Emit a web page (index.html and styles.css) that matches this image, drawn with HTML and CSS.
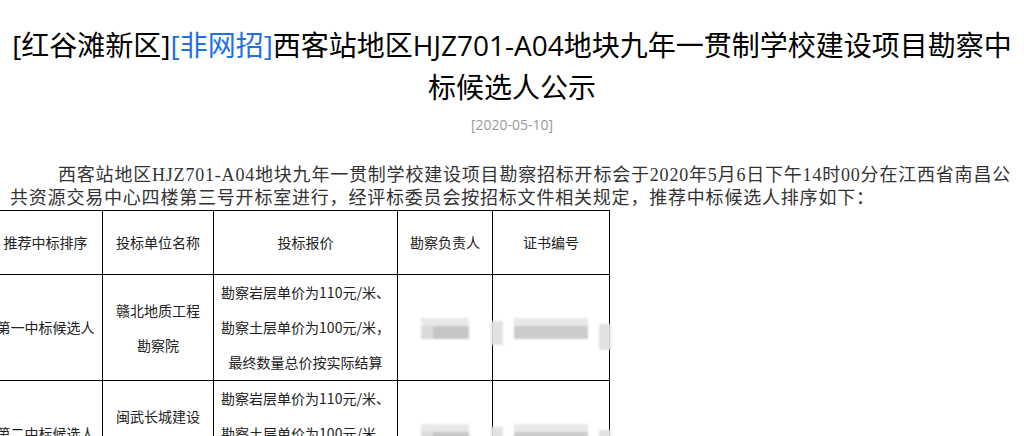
FILE: index.html
```html
<!doctype html>
<html lang="zh-CN">
<head>
    <meta charset="UTF-8">
    <meta name="viewport" content="width=device-width, initial-scale=1.0">
    <title>西客站地区HJZ701-A04地块九年一贯制学校建设项目勘察中标候选人公示</title>
    <link rel="stylesheet" href="styles.css">
</head>
<body>
    <div id="article">
        <h1 class="article-title">[红谷滩新区]<span class="tag">[非网招]</span>西客站地区HJZ701-A04地块九年一贯制学校建设项目勘察中标候选人公示</h1>
        <div class="article-date">[2020-05-10]</div>

        <div class="article-body">
            <p class="lead">西客站地区HJZ701-A04地块九年一贯制学校建设项目勘察招标开标会于2020年5月6日下午14时00分在江西省南昌公共资源交易中心四楼第三号开标室进行，经评标委员会按招标文件相关规定，推荐中标候选人排序如下：</p>

            <table class="result-table">
                <colgroup>
                    <col class="col-rank">
                    <col class="col-name">
                    <col class="col-price">
                    <col class="col-person">
                    <col class="col-cert">
                </colgroup>
                <tr class="head-row">
                    <td>推荐中标排序</td>
                    <td>投标单位名称</td>
                    <td>投标报价</td>
                    <td>勘察负责人</td>
                    <td>证书编号</td>
                </tr>
                <tr>
                    <td>第一中标候选人</td>
                    <td class="cell-name">赣北地质工程勘察院</td>
                    <td>
                        <p>勘察岩层单价为110元/米、</p>
                        <p>勘察土层单价为100元/米，</p>
                        <p>最终数量总价按实际结算</p>
                    </td>
                    <td><span class="mask mask-short"></span></td>
                    <td><span class="mask mask-long"></span></td>
                </tr>
                <tr>
                    <td>第二中标候选人</td>
                    <td class="cell-name">闽武长城建设工程有限公司</td>
                    <td>
                        <p>勘察岩层单价为110元/米、</p>
                        <p>勘察土层单价为100元/米，</p>
                        <p>最终数量总价按实际结算</p>
                    </td>
                    <td><span class="mask mask-short"></span></td>
                    <td><span class="mask mask-long"></span></td>
                </tr>
            </table>
        </div>
    </div>
</body>
</html>
```

FILE: styles.css
```css
body {
    margin: 0;
    padding: 0;
    background: #fff;
    color: #000;
    font-family: "Open Sans", "Noto Sans CJK SC", sans-serif;
    overflow: hidden;
}

#article {
    width: 1024px;
}

.article-title {
    margin: 0;
    padding: 24px 4px 0;
    font-size: 28px;
    font-weight: 400;
    line-height: 42px;
    text-align: center;
    color: #000;
}

.tag {
    color: #1f6fe5;
}

.article-date {
    margin-top: 7px;
    font-size: 14px;
    line-height: 20px;
    text-align: center;
    color: #999;
}

.article-body {
    padding: 0 10px;
}

.lead {
    margin: 29px 0 0;
    font-family: "Liberation Serif", "Noto Sans CJK SC", serif;
    font-size: 18px;
    line-height: 23px;
    letter-spacing: 0.8px;
    text-indent: 48px;
    color: #333;
}

.result-table {
    margin-left: -22px;
    border-collapse: collapse;
    table-layout: fixed;
    width: 621px;
    font-family: "Noto Sans CJK SC", sans-serif;
    font-size: 14px;
    line-height: 35px;
    color: #222;
}

.col-rank { width: 114px; }
.col-name { width: 111px; }
.col-price { width: 184px; }
.col-person { width: 95px; }
.col-cert { width: 117px; }

.result-table td {
    border: 1px solid #000;
    padding: 0 4px;
    text-align: center;
    vertical-align: middle;
}

.result-table td.cell-name {
    padding: 0 8px;
}

.result-table td p {
    margin: 0;
    white-space: nowrap;
}

.head-row td {
    height: 63px;
}

.mask {
    position: relative;
    display: inline-block;
    vertical-align: middle;
    height: 13px;
    margin-top: 6px;
    background: #c6c6c6;
    box-shadow: 0 -8px 0 #e8e8e8;
    filter: blur(1px);
}

.mask-short {
    width: 36px;
    border-left: 12px solid #dadada;
}

.mask-long {
    width: 74px;
    background: #cbcbcb;
}

.mask-long::before,
.mask-long::after {
    content: "";
    position: absolute;
    background: #e2e2e2;
}

.mask-long::before {
    left: -23px;
    top: -5px;
    width: 12px;
    height: 24px;
}

.mask-long::after {
    right: -23px;
    top: -2px;
    width: 12px;
    height: 26px;
}
```
